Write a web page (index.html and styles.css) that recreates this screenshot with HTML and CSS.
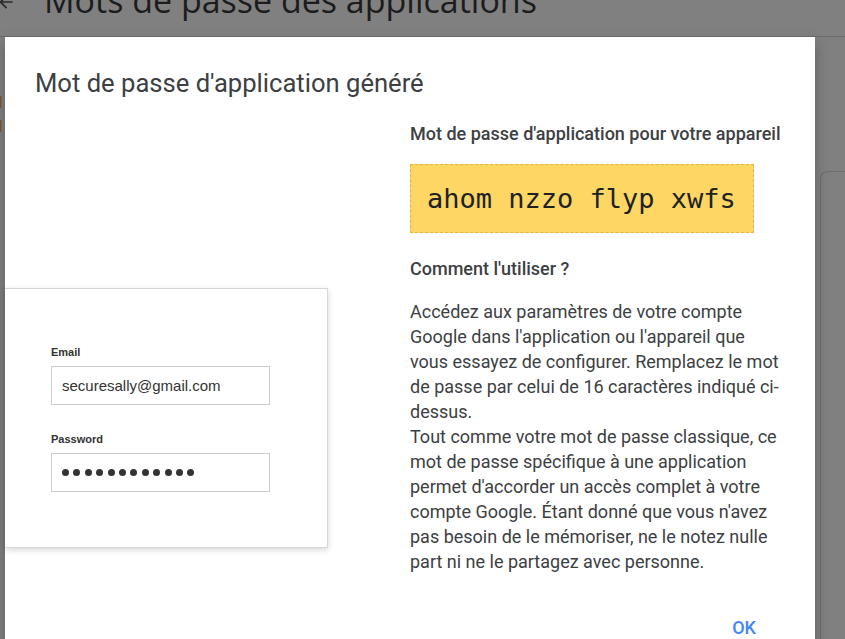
FILE: index.html
```html
<!DOCTYPE html>
<html lang="fr">
<head>
<meta charset="utf-8">
<title>Mots de passe des applications</title>
<link rel="stylesheet" href="styles.css">
</head>
<body>
<div class="page">
  <header class="page-header">
    <span class="back-arrow">
      <svg width="20" height="20" viewBox="0 0 24 24"><path d="M20 11H7.83l5.59-5.59L12 4l-8 8 8 8 1.41-1.41L7.83 13H20v-2z" fill="#2b2b2b"/></svg>
    </span>
    <h1 class="page-title">Mots de passe des applications</h1>
  </header>
  <div class="page-body">
    <div class="page-side">
      <span class="side-bit">d</span>
      <span class="side-bit">d</span>
    </div>
    <div class="bg-card"></div>
  </div>
</div>

<div class="dialog" role="dialog">
  <h2 class="dialog-title">Mot de passe d'application généré</h2>
  <div class="dialog-grid">
    <div class="illustration">
      <div class="login-card">
        <label class="login-label">Email</label>
        <div class="login-input">securesally@gmail.com</div>
        <label class="login-label">Password</label>
        <div class="login-input dots">
          <span></span><span></span><span></span><span></span><span></span><span></span><span></span><span></span><span></span><span></span><span></span><span></span>
        </div>
      </div>
    </div>
    <div class="info">
      <h3 class="info-heading">Mot de passe d'application pour votre appareil</h3>
      <div class="app-password">ahom nzzo flyp xwfs</div>
      <h3 class="info-heading how">Comment l'utiliser ?</h3>
      <p class="info-text">Accédez aux paramètres de votre compte Google dans l'application ou l'appareil que vous essayez de configurer. Remplacez le mot de passe par celui de 16 caractères indiqué ci-dessus.<br>Tout comme votre mot de passe classique, ce mot de passe spécifique à une application permet d'accorder un accès complet à votre compte Google. Étant donné que vous n'avez pas besoin de le mémoriser, ne le notez nulle part ni ne le partagez avec personne.</p>
    </div>
  </div>
  <div class="dialog-actions">
    <button class="ok-btn">OK</button>
  </div>
</div>
</body>
</html>
```

FILE: styles.css
```css
* { box-sizing: border-box; }
html, body {
  margin: 0;
  padding: 0;
  width: 845px;
  height: 639px;
  overflow: hidden;
}
body {
  background: #808080;
  font-family: Roboto, "Liberation Sans", sans-serif;
  position: relative;
}
.page-header {
  height: 37px;
  border-bottom: 1px solid #6b6b6b;
  display: flex;
  align-items: flex-start;
  overflow: hidden;
}
.back-arrow {
  display: block;
  margin-top: -8px;
  margin-left: -4px;
  width: 48px;
}
.page-title {
  margin: -22px 0 0 0;
  font-family: "Open Sans", Roboto, sans-serif;
  font-weight: 400;
  font-size: 34px;
  line-height: 44px;
  color: #1c1c1c;
  white-space: nowrap;
}
.page-body {
  display: grid;
  grid-template-columns: 820px 1fr;
}
.page-side {
  display: flex;
  flex-direction: column;
  padding-top: 55px;
  gap: 4px;
}
.side-bit {
  font-size: 17px;
  line-height: 20px;
  color: #7a5a1c;
  margin-left: -7px;
}
.bg-card {
  margin-top: 134px;
  height: 600px;
  border-left: 1px solid #6e6e6e;
  border-top: 1px solid #6e6e6e;
  border-top-left-radius: 8px;
}
.dialog {
  position: absolute;
  left: 5px;
  top: 37px;
  width: 810px;
  height: 640px;
  background: #fff;
  box-shadow: 0 6px 14px rgba(0,0,0,0.25);
  padding: 30px 30px 0 30px;
  color: #3c4043;
}
.dialog-title {
  margin: 0;
  font-weight: 400;
  font-size: 25.6px;
  line-height: 32px;
  color: #3c4043;
}
.dialog-grid {
  display: grid;
  grid-template-columns: 405px 1fr;
  margin-left: -30px;
  margin-top: 23px;
}
.illustration {
  padding-top: 166px;
}
.login-card {
  width: 323px;
  height: 260px;
  border: 1px solid #d6d6d6;
  border-left: none;
  box-shadow: 0 2px 6px rgba(0,0,0,0.16);
  padding: 56px 0 0 46px;
  font-family: "Liberation Sans", Arial, sans-serif;
}
.login-label {
  display: block;
  font-size: 11px;
  font-weight: 700;
  color: #333;
  line-height: 14px;
  margin-bottom: 7px;
}
.login-input {
  width: 219px;
  height: 39px;
  border: 1px solid #ccc;
  padding: 0 10px;
  display: flex;
  align-items: center;
  font-size: 15px;
  color: #333;
  margin-bottom: 27px;
}
.login-input.dots {
  gap: 4.4px;
}
.login-input.dots span {
  width: 7px;
  height: 7px;
  border-radius: 50%;
  background: #333;
}
.info {
  width: 375px;
}
.info-heading {
  margin: 0;
  font-size: 18px;
  font-weight: 500;
  line-height: 24px;
  color: #3c4043;
  white-space: nowrap;
}
.app-password {
  margin-top: 18px;
  width: 344px;
  height: 69px;
  background: #fdd663;
  border: 1px dashed #e2b53c;
  display: flex;
  align-items: center;
  padding-left: 16px;
  font-family: "DejaVu Sans Mono", monospace;
  font-size: 27px;
  color: #202124;
}
.info-heading.how {
  margin-top: 24px;
}
.info-text {
  margin: 18px 0 0 0;
  font-size: 18px;
  line-height: 25px;
  color: #3c4043;
}
.dialog-actions {
  display: flex;
  justify-content: flex-end;
  padding-right: 21px;
  margin-top: 37px;
}
.ok-btn {
  border: none;
  background: none;
  font-family: Roboto, sans-serif;
  font-weight: 500;
  font-size: 18px;
  color: #4285f4;
  padding: 6px 8px;
}
```
